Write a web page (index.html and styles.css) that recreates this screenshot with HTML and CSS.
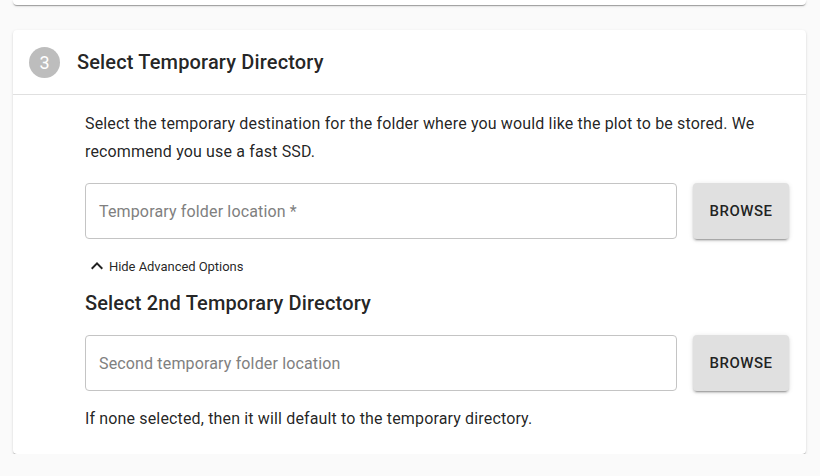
FILE: index.html
```html
<!DOCTYPE html>
<html>
<head>
<meta charset="utf-8">
<link rel="stylesheet" href="styles.css">
</head>
<body>
<div class="page">
  <div class="card card-prev"></div>
  <div class="card">
    <div class="card-header">
      <div class="step">3</div>
      <h1 class="title">Select Temporary Directory</h1>
    </div>
    <div class="card-body">
      <p class="desc">Select the temporary destination for the folder where you would like the plot to be stored. We recommend you use a fast SSD.</p>
      <div class="row">
        <div class="field"><span class="placeholder">Temporary folder location *</span></div>
        <button class="browse">BROWSE</button>
      </div>
      <button class="toggle">
        <svg class="chev" viewBox="0 0 24 24" width="24" height="24"><path d="M12 8l-6 6 1.41 1.41L12 10.83l4.59 4.58L18 14z" fill="#212121"/></svg>
        <span>Hide Advanced Options</span>
      </button>
      <h2 class="subtitle">Select 2nd Temporary Directory</h2>
      <div class="row row2">
        <div class="field"><span class="placeholder">Second temporary folder location</span></div>
        <button class="browse">BROWSE</button>
      </div>
      <p class="note">If none selected, then it will default to the temporary directory.</p>
    </div>
  </div>
</div>
</body>
</html>
```
FILE: styles.css
```css
html, body {
  margin: 0;
  padding: 0;
  background: #fafafa;
  font-family: Roboto, "Liberation Sans", sans-serif;
  color: rgba(0,0,0,0.87);
}
.page {
  padding: 0 14px 0 13px;
  display: flex;
  flex-direction: column;
  gap: 25px;
}
.card {
  background: #fff;
  border-radius: 4px;
  box-shadow: 0 2px 1px -1px rgba(0,0,0,0.2), 0 1px 1px 0 rgba(0,0,0,0.14), 0 1px 3px 0 rgba(0,0,0,0.12);
}
.card-prev {
  height: 5px;
  border-radius: 0 0 4px 4px;
}
.card-header {
  height: 65px;
  box-sizing: border-box;
  display: flex;
  align-items: center;
  padding-left: 16px;
  border-bottom: 1px solid #e0e0e0;
}
.step {
  width: 31px;
  height: 31px;
  border-radius: 50%;
  background: #bdbdbd;
  color: #fff;
  font-size: 18px;
  display: flex;
  align-items: center;
  justify-content: center;
  margin-right: 17px;
}
.title {
  margin: 0;
  font-size: 20px;
  font-weight: 500;
  line-height: 24px;
  letter-spacing: 0.15px;
}
.card-body {
  padding: 15px 17px 23px 72px;
}
.desc {
  margin: 0;
  font-size: 16px;
  line-height: 28px;
  letter-spacing: 0.15px;
}
.row {
  display: flex;
  gap: 16px;
  margin-top: 17px;
}
.row2 {
  margin-top: 20px;
}
.field {
  flex: 1;
  height: 56px;
  box-sizing: border-box;
  border: 1px solid #c4c4c4;
  border-radius: 4px;
  display: flex;
  align-items: center;
  padding-left: 13px;
}
.placeholder {
  font-size: 16px;
  letter-spacing: 0.15px;
  color: #808080;
}
.browse {
  width: 96px;
  height: 56px;
  border: none;
  border-radius: 4px;
  background: #e0e0e0;
  font-family: Roboto, "Liberation Sans", sans-serif;
  font-size: 15px;
  font-weight: 500;
  letter-spacing: 0.5px;
  color: rgba(0,0,0,0.87);
  box-shadow: 0 3px 1px -2px rgba(0,0,0,0.2), 0 2px 2px 0 rgba(0,0,0,0.14), 0 1px 5px 0 rgba(0,0,0,0.12);
  padding: 0;
}
.toggle {
  display: flex;
  align-items: center;
  height: 24px;
  margin-top: 15px;
  padding: 0;
  border: none;
  background: none;
  font-family: Roboto, "Liberation Sans", sans-serif;
  font-size: 13px;
  letter-spacing: -0.05px;
  color: rgba(0,0,0,0.87);
}
.chev {
  display: block;
}
.subtitle {
  margin: 13px 0 0;
  font-size: 20px;
  font-weight: 500;
  line-height: 24px;
  letter-spacing: 0.15px;
}
.note {
  margin: 16px 0 0;
  font-size: 16px;
  line-height: 24px;
  letter-spacing: 0.15px;
}
```
